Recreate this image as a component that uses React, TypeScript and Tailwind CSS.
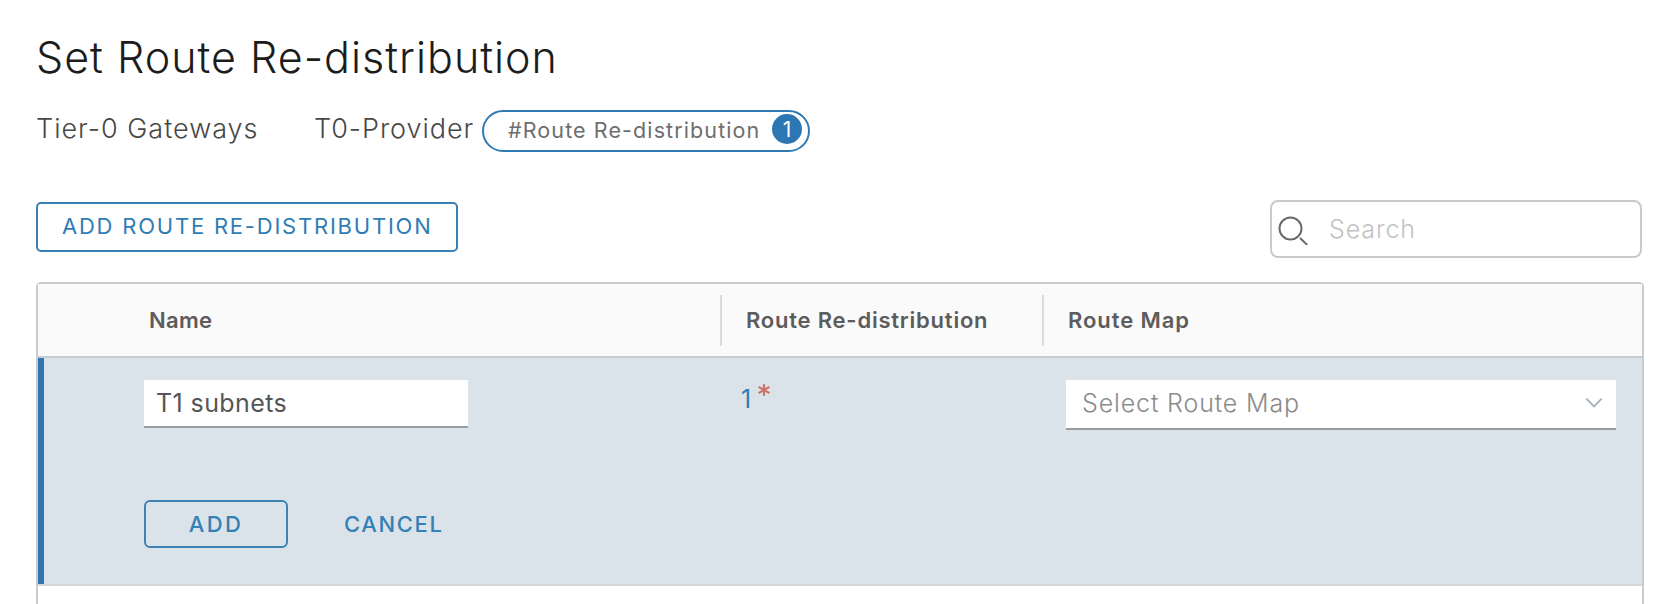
import { ReactNode } from "react";

function SearchIcon() {
  return (
    <svg className="h-8 w-8 shrink-0" viewBox="0 0 32 32" fill="none" stroke="#6a6a6a" strokeWidth="2">
      <circle cx="13.5" cy="15.5" r="11" />
      <path d="M23 25l7.3 7" />
    </svg>
  );
}

function ChevronDown() {
  return (
    <svg className="h-3 w-[18px]" viewBox="0 0 18 12" fill="none" stroke="#a9b4ba" strokeWidth="2">
      <path d="M1.3 1.6L9 9.4l7.7-7.8" />
    </svg>
  );
}

function RequiredMark() {
  return (
    <svg className="-mt-[18px] ml-[7px] h-3 w-3" viewBox="0 0 12 12" stroke="#cc7266" strokeWidth="2.2">
      <path d="M6 .3v11.4M.6 2.9l10.8 6.2M.6 9.1l10.8-6.2" />
    </svg>
  );
}

function HeaderCell({ className, children }: { className: string; children: ReactNode }) {
  return (
    <div className={`flex h-[51px] items-center text-[22px] font-semibold text-[#5c5c5c] ${className}`}>
      {children}
    </div>
  );
}

export default function App() {
  return (
    <div className="h-[604px] w-[1672px] overflow-hidden bg-white pr-[28px] pl-[36px] font-['Inter',sans-serif] leading-none whitespace-nowrap">
      <h1 className="mt-[32px] flex h-[50px] items-center text-[43px] font-light tracking-[1px] text-[#1c1c1c]">
        Set Route Re-distribution
      </h1>

      <div className="mt-[28px] flex h-[42px] items-center text-[27px] font-light text-[#484848]">
        <span className="-mt-1.5 w-[278px] tracking-[1px]">Tier-0 Gateways</span>
        <span className="-mt-1.5 w-[168px] tracking-[0.95px]">T0-Provider</span>
        <div className="flex h-[42px] w-[328px] items-center justify-between rounded-full border-2 border-[#2f7ab3] pr-[6px] pl-[24px]">
          <span className="text-[21.5px] font-normal tracking-[1.1px] text-[#6e6e6e]">#Route Re-distribution</span>
          <span className="-mt-1 flex h-[30px] w-[30px] items-center justify-center rounded-full bg-[#2b76b3] text-[21px] font-normal text-white">
            1
          </span>
        </div>
      </div>

      <div className="mt-[48px] flex h-[58px] justify-between pr-[2px]">
        <button className="mt-[2px] flex h-[50px] w-[422px] items-center rounded-[5px] border-2 border-[#3a80b5] pb-0.5 pl-[24px] text-[22px] tracking-[1.78px] text-[#2f7db5]">
          ADD ROUTE RE-DISTRIBUTION
        </button>
        <div className="flex w-[372px] items-center rounded-[8px] border-2 border-[#cacaca] pl-[5px] text-[25px] font-light tracking-[0.9px] text-[#c2c2c2]">
          <SearchIcon />
          <span className="ml-[20px]">Search</span>
        </div>
      </div>

      <div className="mt-[24px] h-[340px] rounded-t-[5px] border-2 border-b-0 border-[#cbcbcb]">
        <div className="flex h-[74px] items-center border-b-2 border-[#c9ccce] bg-[#fafafa]">
          <HeaderCell className="w-[682px] pl-[111px] tracking-[0.3px]">Name</HeaderCell>
          <HeaderCell className="w-[322px] border-l-2 border-[#dcdcdc] pl-[24px] tracking-[0.78px]">Route Re-distribution</HeaderCell>
          <HeaderCell className="flex-1 border-l-2 border-[#dcdcdc] pl-[24px] tracking-[0.92px]">Route Map</HeaderCell>
        </div>

        <div className="h-[228px] border-b-2 border-[#d3d6d8]">
          <div className="h-full border-l-[6px] border-[#2f76b0] bg-[#dbe3ea] pt-[22px] pl-[100px]">
            <div className="flex">
              <div className="flex h-[48px] w-[324px] items-center border-b-2 border-[#9a9ea1] bg-white pl-[12px] text-[25px] tracking-[0.4px] text-[#565656]">
                T1 subnets
              </div>
              <div className="ml-[273px] flex h-[38px] w-[325px] items-center text-[25px] text-[#2f7db5]">
                1
                <RequiredMark />
              </div>
              <div className="flex h-[50px] w-[550px] items-center justify-between border-b-2 border-[#999b9d] bg-white pr-[13px] pb-0.5 pl-[16px] text-[25px] font-light tracking-[0.86px] text-[#8b8b8b]">
                Select Route Map
                <ChevronDown />
              </div>
            </div>
            <div className="mt-[70px] flex h-[48px] items-center text-[22px] font-medium text-[#3580b5]">
              <button className="flex h-[48px] w-[144px] items-center justify-center rounded-[6px] border-2 border-[#3d82b5] tracking-[2.3px]">
                ADD
              </button>
              <button className="ml-[56px] tracking-[1.65px]">CANCEL</button>
            </div>
          </div>
        </div>
      </div>
    </div>
  );
}
